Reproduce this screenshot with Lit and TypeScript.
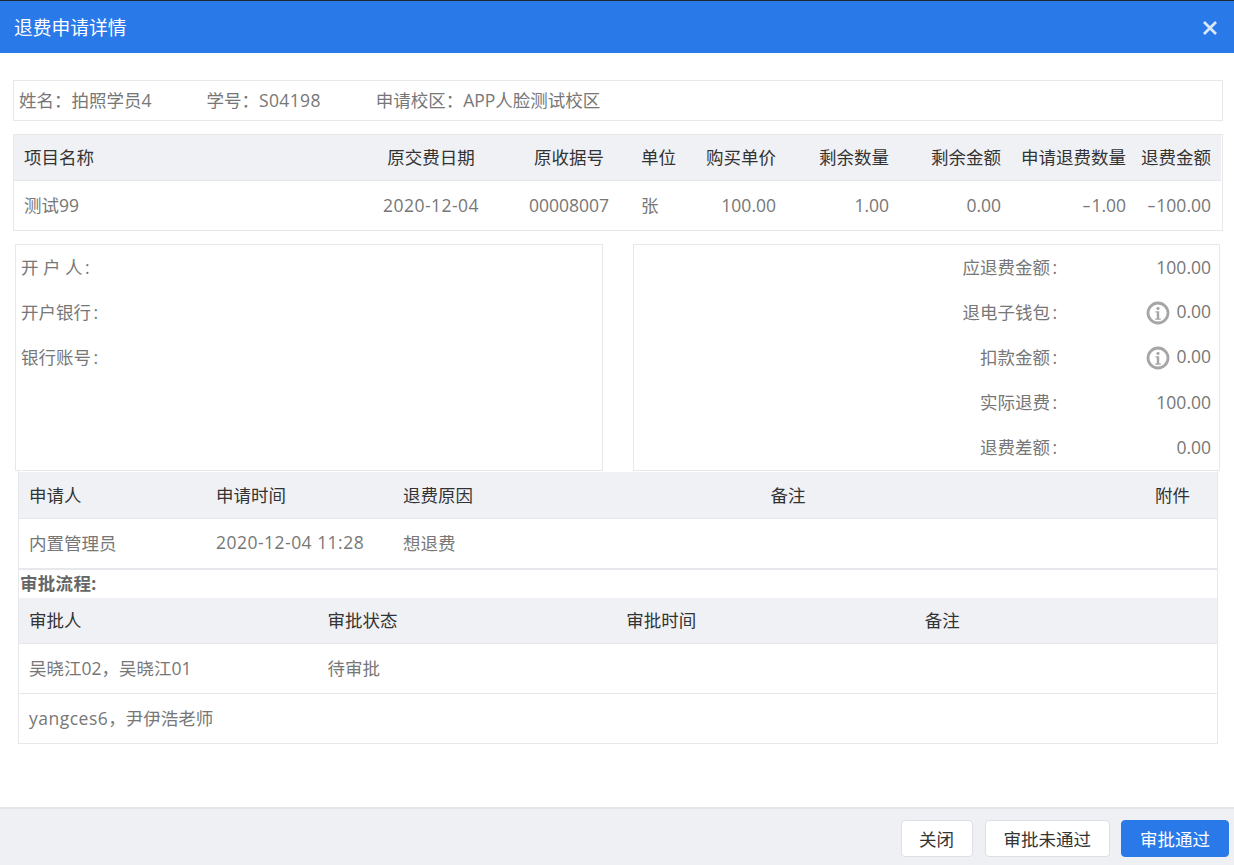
import { LitElement, html, css } from "lit";
import { customElement } from "lit/decorators.js";

const infoIcon = html`<svg class="info" viewBox="0 0 24 24" aria-hidden="true">
  <circle cx="12" cy="12" r="10" fill="none" stroke="#a6a6a6" stroke-width="2.8"></circle>
  <circle cx="12" cy="7.4" r="1.6" fill="#a6a6a6"></circle>
  <path d="M9.4 10.2h3.8v7.2h1.6v1.3H9.2v-1.3h1.6v-5.9H9.4z" fill="#a6a6a6"></path>
</svg>`;

const colon = html`<span class="colon">:</span>`;
const minus = html`<span class="minus">-</span>`;

@customElement("app-root")
export class AppRoot extends LitElement {
  static styles = css`
    :host {
      display: flex;
      flex-direction: column;
      width: 1234px;
      height: 865px;
      box-sizing: border-box;
      background: #fff;
      color: #777;
      font-family: "Open Sans", "Noto Sans CJK SC", sans-serif;
      font-size: 17.5px;
      border-top: 1px solid #1c2530;
      overflow: hidden;
    }
    .head {
      flex: none;
      height: 52px;
      box-sizing: border-box;
      background: #2a79e8;
      color: #fff;
      font-size: 18.75px;
      padding: 0 17px 2px 14px;
      display: flex;
      align-items: center;
      justify-content: space-between;
    }
    .close { display: block; margin-top: 4px; }
    .body { flex: 1; min-height: 0; padding-top: 27px; }
    .info-box {
      height: 41px;
      box-sizing: border-box;
      margin: 0 11px 0 13px;
      border: 1px solid #e8e8e8;
      display: flex;
      align-items: center;
      padding-left: 5px;
      gap: 55px;
      line-height: 1;
    }
    .wide { letter-spacing: 0.35px; }
    .date { letter-spacing: 0.48px; }
    .latin { letter-spacing: 0.5px; }
    .minus {
      display: inline-block;
      width: 9px;
      text-align: center;
      transform: scaleX(1.5);
    }
    .colon { padding-left: 2.5px; }
    .table { box-sizing: border-box; }
    .row { display: grid; align-items: center; }
    .cell { padding: 0 10px 2px; white-space: nowrap; }
    .th { background: #f0f1f5; color: #333; }
    .td { border-top: 1px solid #e8e8ec; }
    .c { text-align: center; }
    .r { text-align: right; }
    .fee {
      margin: 13px 11px 0 13px;
      height: 97px;
      border: 1px solid #e8e8e8;
      padding-right: 1px;
    }
    .fee .row { grid-template-columns: 341px 152px 124px 59px 96px 113px 112px 125px 85px; }
    .fee .th { height: 45px; }
    .fee .td { height: 49px; border-color: #e4e6ec; }
    .fee .last { padding-left: 0; }
    .panels {
      margin: 13px 14px 0 15px;
      display: flex;
      justify-content: space-between;
    }
    .panel {
      width: 588px;
      height: 227px;
      box-sizing: border-box;
      border: 1px solid #e8e8e8;
    }
    .panel.right { width: 587px; }
    .line {
      height: 45px;
      box-sizing: border-box;
      padding-bottom: 2px;
      display: flex;
      align-items: center;
    }
    .left-line { padding-left: 5px; }
    .right-line { justify-content: flex-end; padding-right: 8px; }
    .lab { text-align: right; margin-right: 8px; }
    .val {
      width: 146px;
      display: flex;
      justify-content: flex-end;
      align-items: center;
      gap: 6px;
      margin-top: 1px;
    }
    .val.up { margin-top: -1px; }
    .info { display: block; margin-top: 4px; width: 24px; height: 24px; flex: none; }
    .wrap {
      margin: 0 16px 0 18px;
      border: 1px solid #e6e8ec;
      border-top: 0;
      padding-top: 1px;
      height: 273px;
      box-sizing: border-box;
    }
    .apply .row { grid-template-columns: 187px 187px 187px 416px 221px; }
    .apply .th { height: 46px; }
    .apply .td { height: 49px; border-bottom: 2px solid #e6e8ec; }
    .apply .td .cell { padding-bottom: 3px; }
    .att { text-align: right; padding-right: 27px; }
    .flow-title {
      height: 28px;
      box-sizing: border-box;
      padding: 0 0 0 1px;
      display: flex;
      align-items: center;
      font-weight: 700;
      color: #666;
      line-height: 1;
      letter-spacing: 0.3px;
    }
    .flow .row { grid-template-columns: repeat(4, 298.6px); }
    .flow .th { height: 45px; }
    .flow .td { height: 49px; }
    .foot {
      flex: none;
      height: 58px;
      box-sizing: border-box;
      background: #eff0f4;
      border-top: 2px solid #e4e5ea;
      display: flex;
      justify-content: flex-end;
      gap: 11px;
      padding: 11px 5px 0 0;
    }
    button {
      font: inherit;
      height: 37px;
      padding: 2px 18px 0;
      border-radius: 4px;
      border: 1px solid #dcdfe6;
      background: #fff;
      color: #333;
      line-height: 1;
    }
    button.first { padding: 2px 17.5px 0; margin-right: 1px; }
    button.primary { background: #2a79e8; border-color: #2a79e8; color: #fff; }
  `;

  render() {
    return html`
      <div class="head">
        <span>退费申请详情</span>
        <svg class="close" width="14" height="14" viewBox="0 0 14 14" aria-hidden="true">
          <path d="M1 1l12 12M13 1L1 13" stroke="#dbe8fb" stroke-width="2.8" fill="none"></path>
        </svg>
      </div>
      <div class="body">
        <div class="info-box">
          <span>姓名：拍照学员4</span>
          <span>学号：<span class="wide">S04198</span></span>
          <span>申请校区：APP人脸测试校区</span>
        </div>
        <div class="table fee">
          <div class="row th">
            <div class="cell">项目名称</div><div class="cell c">原交费日期</div><div class="cell c">原收据号</div>
            <div class="cell">单位</div><div class="cell r">购买单价</div><div class="cell r">剩余数量</div>
            <div class="cell r">剩余金额</div><div class="cell r">申请退费数量</div><div class="cell r last">退费金额</div>
          </div>
          <div class="row td">
            <div class="cell">测试99</div><div class="cell c"><span class="date">2020-12-04</span></div><div class="cell c">00008007</div>
            <div class="cell">张</div><div class="cell r">100.00</div><div class="cell r">1.00</div>
            <div class="cell r">0.00</div><div class="cell r">${minus}1.00</div><div class="cell r last">${minus}100.00</div>
          </div>
        </div>
        <div class="panels">
          <div class="panel">
            <div class="line left-line"><span>开 户 人${colon}</span></div>
            <div class="line left-line"><span>开户银行${colon}</span></div>
            <div class="line left-line"><span>银行账号${colon}</span></div>
          </div>
          <div class="panel right">
            <div class="line right-line"><span class="lab">应退费金额${colon}</span><span class="val">100.00</span></div>
            <div class="line right-line"><span class="lab">退电子钱包${colon}</span><span class="val up">${infoIcon}0.00</span></div>
            <div class="line right-line"><span class="lab">扣款金额${colon}</span><span class="val up">${infoIcon}0.00</span></div>
            <div class="line right-line"><span class="lab">实际退费${colon}</span><span class="val">100.00</span></div>
            <div class="line right-line"><span class="lab">退费差额${colon}</span><span class="val">0.00</span></div>
          </div>
        </div>
        <div class="wrap">
          <div class="table apply">
            <div class="row th">
              <div class="cell">申请人</div><div class="cell">申请时间</div><div class="cell">退费原因</div>
              <div class="cell c">备注</div><div class="cell att">附件</div>
            </div>
            <div class="row td">
              <div class="cell">内置管理员</div><div class="cell"><span class="date">2020-12-04 11:28</span></div><div class="cell">想退费</div>
              <div class="cell"></div><div class="cell"></div>
            </div>
          </div>
          <div class="flow-title">审批流程:</div>
          <div class="table flow">
            <div class="row th">
              <div class="cell">审批人</div><div class="cell">审批状态</div><div class="cell">审批时间</div><div class="cell">备注</div>
            </div>
            <div class="row td">
              <div class="cell">吴晓江02，吴晓江01</div><div class="cell">待审批</div><div class="cell"></div><div class="cell"></div>
            </div>
            <div class="row td">
              <div class="cell"><span class="latin">yangces6</span>，尹伊浩老师</div><div class="cell"></div><div class="cell"></div><div class="cell"></div>
            </div>
          </div>
        </div>
      </div>
      <div class="foot">
        <button class="first">关闭</button>
        <button>审批未通过</button>
        <button class="primary">审批通过</button>
      </div>
    `;
  }
}
